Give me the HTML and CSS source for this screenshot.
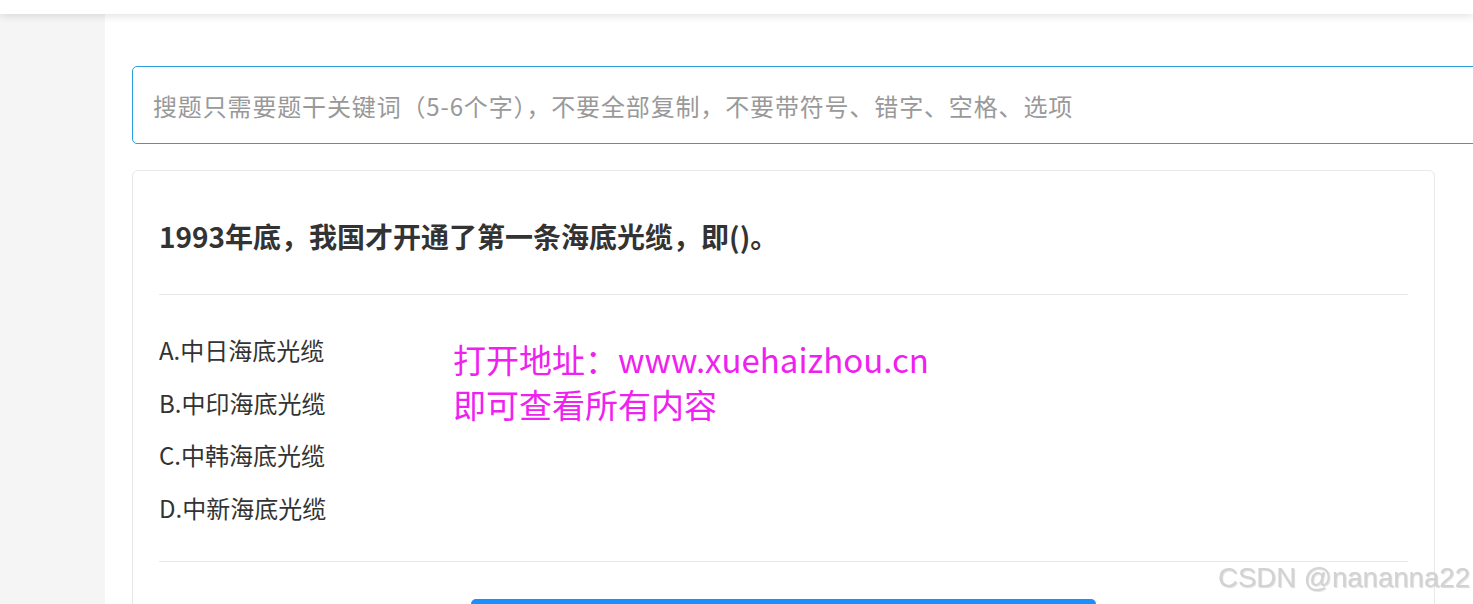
FILE: index.html
```html
<!DOCTYPE html>
<html lang="zh-CN">
<head>
  <meta charset="UTF-8" />
  <meta name="viewport" content="width=device-width, initial-scale=1" />
  <title>搜题</title>
  <link rel="stylesheet" href="styles.css">
</head>
<body>
<div class="topbar"></div>
<div class="layout">
  <aside class="sidebar"></aside>
  <main class="main">
    <div class="search-box">
      <input type="text" class="search-input" placeholder="搜题只需要题干关键词（5-6个字），不要全部复制，不要带符号、错字、空格、选项">
    </div>

    <div class="card">
      <div class="card-head">
        <h2 class="question">1993年底，我国才开通了第一条海底光缆，即()。</h2>
      </div>
      <div class="card-body">
        <ul class="options">
          <li>A.中日海底光缆</li>
          <li>B.中印海底光缆</li>
          <li>C.中韩海底光缆</li>
          <li>D.中新海底光缆</li>
        </ul>
        <div class="promo">
          打开地址：www.xuehaizhou.cn<br>
          即可查看所有内容
        </div>
      </div>
      <div class="card-foot">
        <!-- 按钮文字在截图之外 -->
        <button class="answer-btn" aria-label="查看答案"></button>
      </div>
    </div>
  </main>
</div>
<div class="watermark">CSDN @nananna22</div>
</body>
</html>
```

FILE: styles.css
```css
html, body {
  margin: 0;
  height: 100%;
  overflow: hidden;
}

body {
  background: #fff;
  font-family: "Noto Sans CJK SC", "Noto Sans", sans-serif;
  color: #333;
}

.topbar {
  height: 14px;
  background: #fff;
  box-shadow: 0 2px 8px rgba(0, 0, 0, 0.12);
  position: relative;
  z-index: 2;
}

.layout {
  display: flex;
  height: calc(100% - 14px);
}

.sidebar {
  width: 105px;
  flex-shrink: 0;
  background: #f5f5f5;
}

.main {
  flex: 1;
  padding: 52px 0 0 27px;
  overflow: hidden;
}

.search-box {
  width: 1400px;
}

.search-input {
  width: 100%;
  height: 78px;
  box-sizing: border-box;
  border: 1px solid #2a9fde;
  border-radius: 5px;
  padding: 0 20px;
  font-family: inherit;
  font-size: 24px;
  letter-spacing: 0.85px;
  color: #333;
  outline: none;
}

.search-input::placeholder {
  color: #999;
}

.card {
  width: 1303px;
  box-sizing: border-box;
  margin-top: 26px;
  border: 1px solid #e8e8e8;
  border-radius: 6px;
  padding: 0 26px;
}

.card-head {
  padding: 45px 0 38px;
  border-bottom: 1px solid #e8e8e8;
}

.question {
  margin: 0;
  font-size: 28px;
  line-height: 40px;
  font-weight: 700;
  color: #333;
}

.card-body {
  display: flex;
  padding: 29px 0 27px;
  border-bottom: 1px solid #e8e8e8;
}

.options {
  list-style: none;
  margin: 0;
  padding: 0;
  width: 294px;
  font-size: 24px;
  line-height: 52.5px;
  color: #333;
}

.promo {
  margin-top: 13px;
  font-size: 33px;
  line-height: 45px;
  color: #f020f0;
}

.card-foot {
  padding-top: 37px;
  display: flex;
  justify-content: center;
}

.answer-btn {
  width: 625px;
  height: 64px;
  border: none;
  border-radius: 5px;
  background: #1890ff;
}

.watermark {
  position: fixed;
  right: 3px;
  bottom: 10px;
  font-family: "Liberation Sans", Arial, sans-serif;
  font-size: 27.6px;
  color: #d2d2d2;
  text-shadow: 1px 1px 1px rgba(0, 0, 0, 0.15);
}
```
